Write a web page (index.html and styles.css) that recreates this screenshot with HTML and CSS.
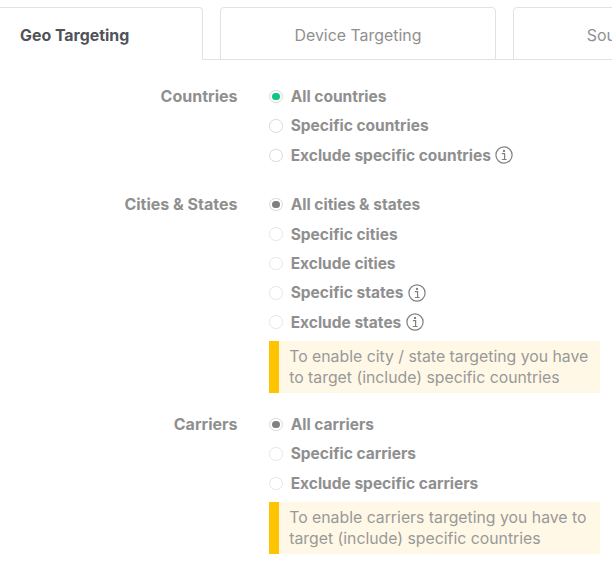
FILE: index.html
```
<!DOCTYPE html>
<html lang="en">
<head>
<meta charset="utf-8">
<title>Targeting</title>
<link rel="stylesheet" href="styles.css">
</head>
<body>
<div class="page">
  <div class="tabs">
    <div class="tab tab-active">Geo Targeting</div>
    <div class="tab tab-device">Device Targeting</div>
    <div class="tab tab-source">Source Targeting</div>
  </div>
  <div class="form">
    <section class="group group-first">
      <div class="group-label">Countries</div>
      <div class="options">
        <div class="option"><span class="radio radio-green"></span><span>All countries</span></div>
        <div class="option"><span class="radio"></span><span>Specific countries</span></div>
        <div class="option"><span class="radio"></span><span>Exclude specific countries</span>
          <svg class="info" viewBox="0 0 18 18"><circle cx="9" cy="9" r="8.1"/><path d="M6.9 7.6H9.6V13.4M6.8 13.5H11.6"/><circle class="dot" cx="9" cy="4.9" r="1.2"/></svg></div>
      </div>
    </section>
    <section class="group">
      <div class="group-label">Cities &amp; States</div>
      <div class="options">
        <div class="option"><span class="radio radio-grey"></span><span>All cities &amp; states</span></div>
        <div class="option"><span class="radio radio-off"></span><span>Specific cities</span></div>
        <div class="option"><span class="radio radio-off"></span><span>Exclude cities</span></div>
        <div class="option"><span class="radio radio-off"></span><span>Specific states</span>
          <svg class="info" viewBox="0 0 18 18"><circle cx="9" cy="9" r="8.1"/><path d="M6.9 7.6H9.6V13.4M6.8 13.5H11.6"/><circle class="dot" cx="9" cy="4.9" r="1.2"/></svg></div>
        <div class="option"><span class="radio radio-off"></span><span>Exclude states</span>
          <svg class="info" viewBox="0 0 18 18"><circle cx="9" cy="9" r="8.1"/><path d="M6.9 7.6H9.6V13.4M6.8 13.5H11.6"/><circle class="dot" cx="9" cy="4.9" r="1.2"/></svg></div>
        <div class="notice">To enable city / state targeting you have to target (include) specific countries</div>
      </div>
    </section>
    <section class="group">
      <div class="group-label">Carriers</div>
      <div class="options">
        <div class="option"><span class="radio radio-grey"></span><span>All carriers</span></div>
        <div class="option"><span class="radio radio-off"></span><span>Specific carriers</span></div>
        <div class="option"><span class="radio radio-off"></span><span>Exclude specific carriers</span></div>
        <div class="notice">To enable carriers targeting you have to target (include) specific countries</div>
      </div>
    </section>
  </div>
</div>
</body>
</html>
```
FILE: styles.css
```
* { box-sizing: border-box; }
html, body { margin: 0; padding: 0; background: #fff; }
body {
  width: 612px;
  height: 571px;
  overflow: hidden;
  font-family: Inter, "Liberation Sans", sans-serif;
  color: #8f8f8f;
}
.page { width: 612px; overflow: hidden; }
.tabs {
  display: flex;
  height: 60px;
  padding-top: 7px;
  margin-left: -10px;
  border-bottom: 1px solid #e2e2e2;
}
.tab {
  flex: none;
  height: 53px;
  border: 1px solid #e2e2e2;
  border-radius: 4px 4px 0 0;
  font-size: 15.9px;
  line-height: 55.5px;
  text-align: center;
  color: #909090;
  white-space: nowrap;
  margin-right: 17px;
}
.tab-active {
  width: 213px;
  padding-left: 29px;
  text-align: left;
  color: #4f5359;
  font-weight: 700;
  border-bottom-color: #fff;
  background: #fff;
}
.tab-device, .tab-source { width: 276px; }
.form { padding-top: 21.8px; display: flex; flex-direction: column; gap: 16px; }
.group { display: flex; }
.group-first { margin-bottom: 4px; }
.group-label {
  width: 237.5px;
  flex: none;
  text-align: right;
  font-size: 16px;
  font-weight: 700;
  line-height: 29.4px;
  color: #8f8f8f;
  height: 29.4px;
}
.options { margin-left: 31.7px; width: 330.5px; }
.option {
  display: flex;
  align-items: center;
  height: 29.4px;
  font-size: 15.5px;
  font-weight: 700;
  color: #8f8f8f;
  white-space: nowrap;
}
.radio {
  width: 13.5px;
  height: 13.5px;
  margin-right: 8px;
  border: 1px solid #d9d9d9;
  border-radius: 50%;
  background: #fff;
  flex: none;
  display: flex;
  align-items: center;
  justify-content: center;
}
.radio-off { border-color: #e6e6e6; }
.radio-green::after, .radio-grey::after {
  content: "";
  width: 7.5px;
  height: 7.5px;
  border-radius: 50%;
}
.radio-green::after { background: #0cc77f; }
.radio-grey::after { background: #808080; }
.info { width: 18px; height: 18px; margin-left: 4.5px; fill: none; stroke: #808080; stroke-width: 1.2; flex: none; }
.info .dot { fill: #808080; stroke: none; }
.notice {
  margin-top: 4.2px;
  margin-bottom: 0.8px;
  width: 330.5px;
  height: 52px;
  padding: 4.5px 0 0 10px;
  border-left: 10.5px solid #ffc400;
  background: #fff8e6;
  font-size: 15.8px;
  line-height: 21px;
  color: #999;
}
```
